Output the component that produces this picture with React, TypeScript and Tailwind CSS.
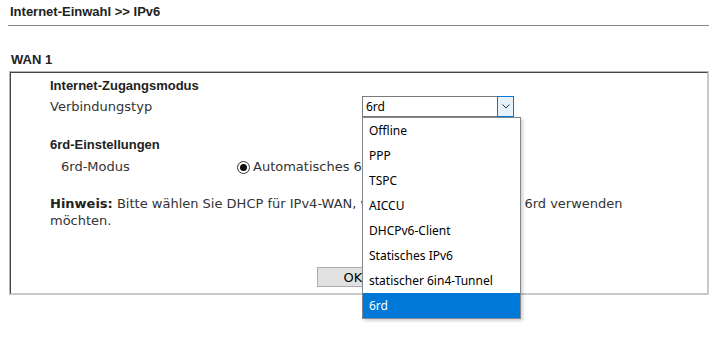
import React from "react";

const options = [
  "Offline",
  "PPP",
  "TSPC",
  "AICCU",
  "DHCPv6-Client",
  "Statisches IPv6",
  "statischer 6in4-Tunnel",
  "6rd",
];

function Radio({ checked }: { checked?: boolean }) {
  return (
    <svg width="13" height="13" viewBox="0 0 13 13" className="shrink-0">
      <circle cx="6.5" cy="6.5" r="6" fill="#fff" stroke="#333" strokeWidth="1" />
      {checked && <circle cx="6.5" cy="6.5" r="3.5" fill="#111" />}
    </svg>
  );
}

export default function App() {
  const body = "font-['DejaVu_Sans',Verdana,sans-serif] text-[13px]";
  const bold = "font-['Liberation_Sans',Arial,sans-serif] text-[13px] font-bold text-[#222]";

  return (
    <div className="relative w-[720px] h-[346px] overflow-hidden bg-white text-[#333]">
      {/* title */}
      <div className={`pl-[10px] pt-[4px] h-[25px] leading-[16px] ${bold}`}>Internet-Einwahl &gt;&gt; IPv6</div>
      <div className="ml-[8px] w-[701px] h-px bg-[#888]" />

      <div className={`mt-[26px] pl-[11px] h-[16px] leading-[16px] ${bold}`}>WAN 1</div>

      {/* panel */}
      <div className="mt-[3px] ml-[9px] w-[700px] h-[224px] border border-t-[#b4b4b4] border-l-[#b4b4b4] border-b-[#c8c8c8] border-r-[#c8c8c8]">
        <div className="h-full border border-t-[#444] border-l-[#444] border-b-[#c8c8c8] border-r-[#c8c8c8] pt-[3px] pl-[39px]">
          <div className={`h-[20px] leading-[20px] ${bold}`}>Internet-Zugangsmodus</div>

          <div className={`flex items-center h-[21px] ${body}`}>
            <div className="w-[312px]">Verbindungstyp</div>
            <div className="relative z-10">
              <div className="flex w-[152px] h-[21px] bg-white">
                <div className="flex-1 flex items-center pl-[3px] border border-r-0 border-[#7a7a7a] font-['Noto_Sans',sans-serif] text-[12px] text-black">
                  6rd
                </div>
                <div className="w-[17px] h-full flex items-center justify-center border border-[#0078d7] bg-[#e5f1fb]">
                  <svg width="8" height="5" viewBox="0 0 8 5">
                    <polyline points="0.5,0.5 4,4 7.5,0.5" fill="none" stroke="#333" strokeWidth="1" />
                  </svg>
                </div>
              </div>
              {/* open list */}
              <div className="absolute left-0 top-full w-[159px] border border-[#828790] bg-white shadow-[2px_2px_3px_rgba(0,0,0,0.18)] font-['Noto_Sans',sans-serif] text-[12px] text-black">
                {options.map((o) => (
                  <div
                    key={o}
                    className={`h-[25px] flex items-center pl-[6px] ${o === "6rd" ? "bg-[#0078d7] text-white" : ""}`}
                  >
                    {o}
                  </div>
                ))}
              </div>
            </div>
          </div>

          <div className={`mt-[18px] h-[20px] leading-[20px] ${bold}`}>6rd-Einstellungen</div>

          <div className={`mt-[2px] flex items-center h-[20px] ${body}`}>
            <div className="w-[187px] pl-[11px]">6rd-Modus</div>
            <Radio checked />
            <span className="ml-[3px]">Automatisches 6rd</span>
            <span className="ml-[14px]"><Radio /></span>
            <span className="ml-[3px]">Statisches 6rd</span>
          </div>

          <div className={`mt-[18px] leading-[17px] ${body}`}>
            <span className="font-bold text-[#222]">Hinweis:</span> Bitte wählen Sie DHCP für IPv4-WAN, wenn Sie Automatisches 6rd verwenden
            <br />
            möchten.
          </div>

          <button className={`mt-[38px] ml-[267px] w-[72px] h-[20px] border border-[#adadad] bg-[#e1e1e1] text-black ${body}`}>
            OK
          </button>
        </div>
      </div>
    </div>
  );
}
